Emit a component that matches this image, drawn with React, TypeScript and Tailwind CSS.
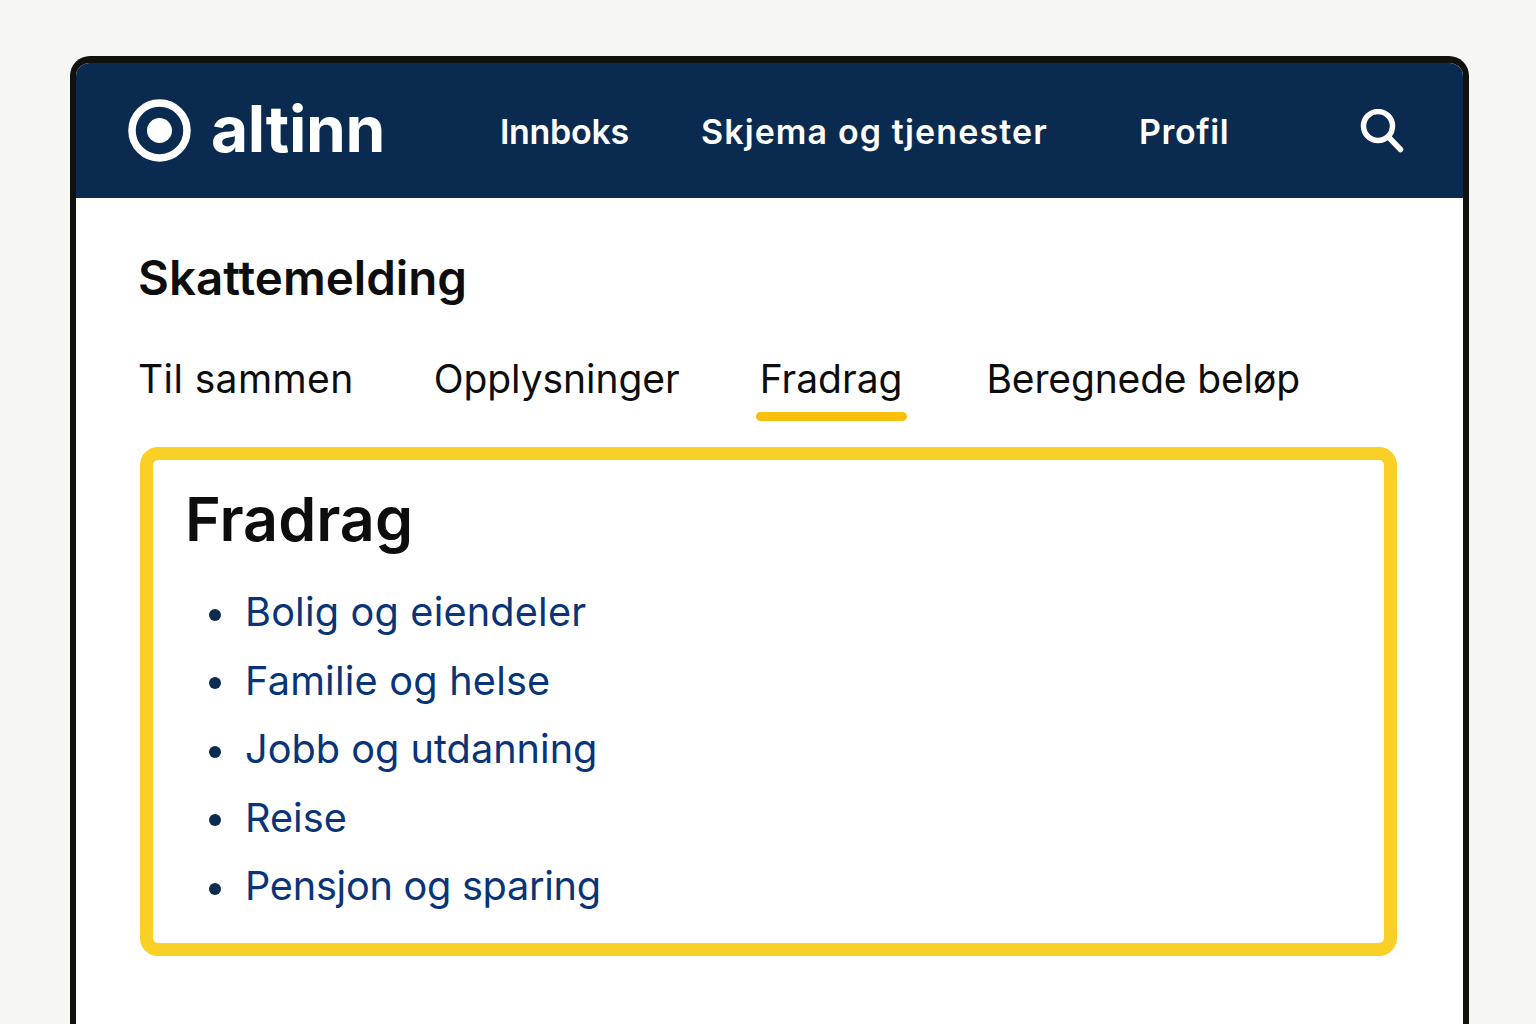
import React from 'react';

const tabs = [
  { label: 'Til sammen', cls: 'mr-[80px] tracking-[0.4px]' },
  { label: 'Opplysninger', cls: 'mr-[80px] tracking-[-0.05px]' },
  { label: 'Fradrag', cls: 'mr-[84px]' },
  { label: 'Beregnede beløp', cls: 'tracking-[-0.15px]' },
];
const links = [
  { label: 'Bolig og eiendeler', cls: 'tracking-[0.17px]' },
  { label: 'Familie og helse', cls: 'tracking-[0.2px]' },
  { label: 'Jobb og utdanning', cls: '' },
  { label: 'Reise', cls: '' },
  { label: 'Pensjon og sparing', cls: 'tracking-[-0.28px]' },
];

const App: React.FC = () => {
  return (
    <div className="h-[1024px] overflow-hidden bg-[#f6f7f3] pt-14 pl-[70px] pr-[67px] font-['Inter',sans-serif]">
      <div className="h-[1000px] overflow-hidden rounded-t-[20px] border-x-[6px] border-t-[7px] border-[#111210] bg-white">
        {/* Header */}
        <header className="flex h-[135px] items-center bg-[#0a2b4f] pl-[52px] pr-[59px] text-white">
          <div className="flex w-[372px] items-center">
            <svg width="63" height="63" viewBox="0 0 63 63" fill="none" className="mr-[20px]">
              <circle cx="31.5" cy="31.5" r="27.5" stroke="white" strokeWidth="7.5" />
              <circle cx="31.5" cy="31.5" r="12.5" fill="white" />
            </svg>
            <span className="-mt-1 text-[64px] leading-none font-bold tracking-[-0.3px]">altinn</span>
          </div>
          <nav className="mt-[2px] flex flex-1 items-center text-[34px] font-semibold">
            <span className="w-[201px] tracking-[-0.3px]">Innboks</span>
            <span className="w-[438px] tracking-[1.1px]">Skjema og tjenester</span>
            <span className="tracking-[0.6px]">Profil</span>
          </nav>
          <svg width="44" height="44" viewBox="0 0 44 44" fill="none" stroke="white" strokeWidth="5.5" strokeLinecap="round">
            <circle cx="18" cy="17" r="14.5" />
            <path d="M28.5 28 L40.5 40.5" />
          </svg>
        </header>

        {/* Content */}
        <main className="pt-[48px] pl-[64px] pr-[66px]">
          <h1 className="-ml-[2px] text-[47.5px] leading-[64px] font-semibold text-[#0d0d0d]">Skattemelding</h1>
          <div className="mt-[41px] -ml-[2px] flex text-[39px] leading-[56px] text-[#0d0d0d]">
            {tabs.map((tab) => (
              <div key={tab.label} className={`relative ${tab.cls}`}>
                {tab.label}
                {tab.label === 'Fradrag' && (
                  <div className="absolute -left-[4px] -right-[5px] -bottom-[14px] h-[9px] rounded-full bg-[#f8bf0c]" />
                )}
              </div>
            ))}
          </div>

          <section className="mt-[40px] h-[509px] rounded-[18px] border-[13px] border-[#fbd026] pt-[21px] pl-[32px]">
            <h2 className="text-[61px] leading-[76px] font-semibold text-[#0d0d0d]">Fradrag</h2>
            <ul className="mt-[27px] flex flex-col gap-[12.5px] pl-[24px]">
              {links.map((link) => (
                <li key={link.label} className={`flex h-[56px] items-center text-[39.7px] leading-[56px] text-[#0a3478] ${link.cls}`}>
                  <span className="mt-[5px] mr-[24px] h-[12px] w-[12px] rounded-full bg-[#0b2c50]" />
                  {link.label}
                </li>
              ))}
            </ul>
          </section>
        </main>
      </div>
    </div>
  );
};

export default App;
